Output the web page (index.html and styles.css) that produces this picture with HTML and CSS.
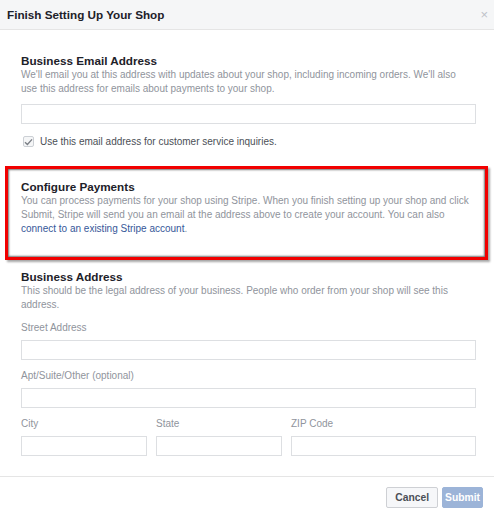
FILE: index.html
```html
<!DOCTYPE html>
<html lang="en">
<head>
    <meta charset="UTF-8">
    <title>Finish Setting Up Your Shop</title>
    <link rel="stylesheet" href="styles.css">
</head>
<body>
    <div class="dialog">
        <div class="dialog-header">
            <span class="dialog-title">Finish Setting Up Your Shop</span>
            <span class="close">&times;</span>
        </div>

        <div class="dialog-body">
            <div class="section email-section">
                <h3>Business Email Address</h3>
                <p class="desc">We'll email you at this address with updates about your shop, including incoming orders. We'll also use this address for emails about payments to your shop.</p>
                <div class="input"></div>
                <label class="check-row">
                    <span class="checkbox">
                        <svg width="9" height="8" viewBox="0 0 9 8"><path d="M1 4.2 L3.4 6.4 L8 1.4" fill="none" stroke="#7b7f86" stroke-width="1.4"/></svg>
                    </span>
                    Use this email address for customer service inquiries.
                </label>
            </div>

            <div class="highlight">
                <h3>Configure Payments</h3>
                <p class="desc">You can process payments for your shop using Stripe. When you finish setting up your shop and click Submit, Stripe will send you an email at the address above to create your account. You can also <a href="#" class="stripe-link">connect to an existing Stripe account</a>.</p>
            </div>

            <div class="section address-section">
                <h3>Business Address</h3>
                <p class="desc">This should be the legal address of your business. People who order from your shop will see this address.</p>
                <div class="field">
                    <div class="label">Street Address</div>
                    <div class="input"></div>
                </div>
                <div class="field">
                    <div class="label">Apt/Suite/Other (optional)</div>
                    <div class="input"></div>
                </div>
                <div class="field-row">
                    <div class="field city">
                        <div class="label">City</div>
                        <div class="input"></div>
                    </div>
                    <div class="field state">
                        <div class="label">State</div>
                        <div class="input"></div>
                    </div>
                    <div class="field zip">
                        <div class="label">ZIP Code</div>
                        <div class="input"></div>
                    </div>
                </div>
            </div>
        </div>

        <div class="dialog-footer">
            <button class="btn cancel">Cancel</button>
            <button class="btn submit">Submit</button>
        </div>
    </div>
</body>
</html>
```

FILE: styles.css
```css
body {
    margin: 0;
    font-family: "Liberation Sans", Arial, sans-serif;
    background: #fff;
    color: #1d2129;
}
.dialog {
    width: 494px;
    height: 511px;
    background: #fff;
}
.dialog-header {
    height: 30px;
    box-sizing: border-box;
    background: #f5f6f7;
    border-bottom: 1px solid #e5e5e5;
    display: flex;
    align-items: center;
    justify-content: space-between;
    padding: 0 6px 0 7px;
}
.dialog-title {
    font-size: 11.7px;
    font-weight: bold;
    color: #1d2129;
}
.close {
    font-size: 13px;
    color: #bec2c9;
}
.dialog-body {
    padding: 24px 18px 0 21px;
}
h3 {
    margin: 0;
    font-size: 11.7px;
    font-weight: bold;
    color: #1d2129;
    line-height: 14px;
}
.desc {
    margin: 0;
    font-size: 10px;
    line-height: 14px;
    color: #90949c;
}
.email-section .desc {
    padding-right: 6px;
}
.desc a {
    color: #365899;
    text-decoration: none;
}
.stripe-link {
    display: inline-block;
}
.input {
    height: 20px;
    box-sizing: border-box;
    border: 1px solid #dddfe2;
    background: #fff;
}
.email-section .input {
    margin-top: 8px;
}
.check-row {
    display: flex;
    align-items: center;
    gap: 6px;
    margin-top: 12px;
    padding-left: 2px;
    font-size: 10px;
    color: #4b4f56;
}
.checkbox {
    width: 11px;
    height: 11px;
    box-sizing: border-box;
    border: 1px solid #ccd0d5;
    border-radius: 2px;
    background: #f5f6f7;
    display: flex;
    align-items: center;
    justify-content: center;
}
.highlight {
    margin: 19px -12px 0 -16px;
    height: 94px;
    box-sizing: border-box;
    border: 3px solid #f10000;
    box-shadow: inset 0 0 2px 1px rgba(0, 0, 0, 0.55), 2px 2px 2px rgba(0, 0, 0, 0.35);
    padding: 11px 0 0 13px;
}
.address-section {
    margin-top: 10px;
}
.field {
    margin-top: 9px;
}
.label {
    font-size: 10px;
    line-height: 14px;
    color: #90949c;
    margin-bottom: 5px;
}
.field-row {
    display: flex;
    gap: 9px;
}
.city, .state {
    width: 126px;
}
.zip {
    flex: 1;
}
.dialog-footer {
    margin-top: 20px;
    border-top: 1px solid #e5e5e5;
    display: flex;
    justify-content: flex-end;
    gap: 4px;
    padding: 10px 11px 0 0;
}
.btn {
    height: 21px;
    font-family: "Liberation Sans", Arial, sans-serif;
    font-size: 10.3px;
    font-weight: bold;
    border-radius: 2px;
    padding: 0 8px;
}
.cancel {
    background: #f6f7f9;
    border: 1px solid #ced0d4;
    color: #4b4f56;
}
.submit {
    padding: 0 2px;
    background: #9cb4d8;
    border: 1px solid #9cb4d8;
    color: #fff;
}
```
